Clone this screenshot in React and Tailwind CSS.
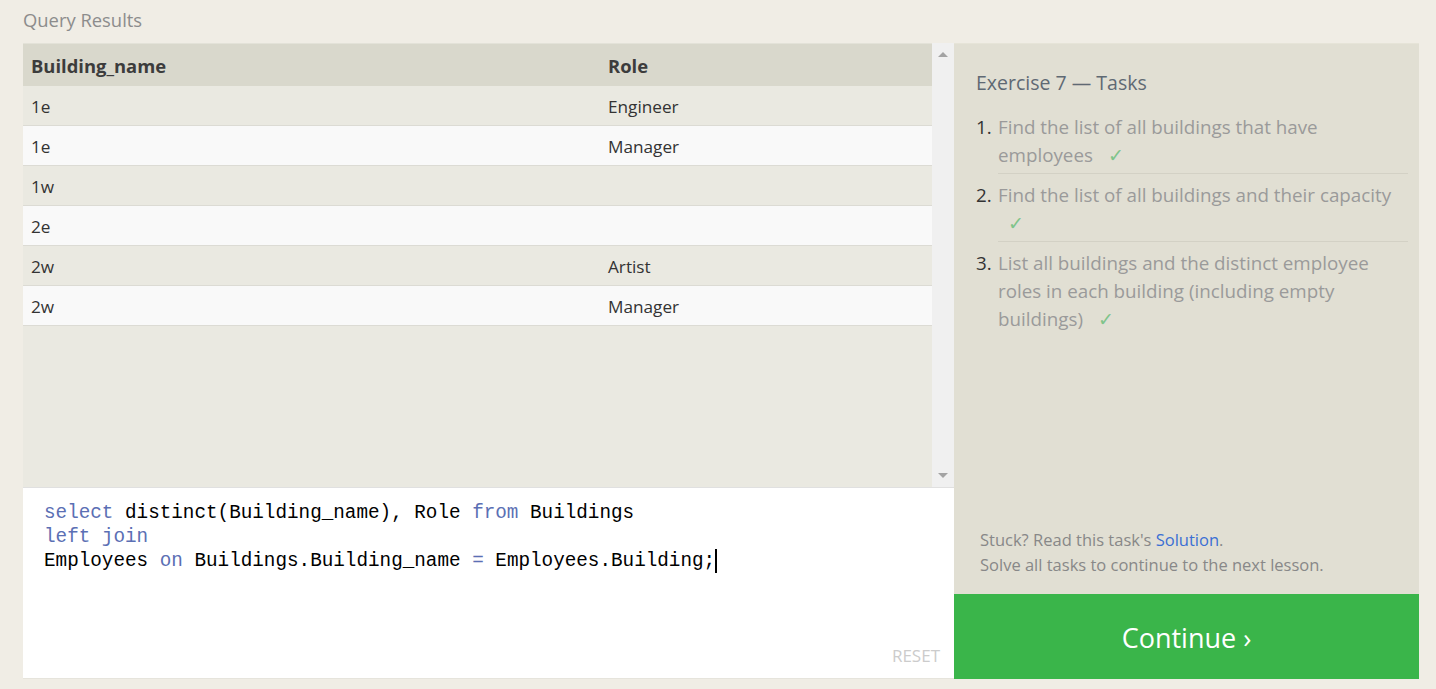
import React from "react";

const rows = [
  ["1e", "Engineer"],
  ["1e", "Manager"],
  ["1w", ""],
  ["2e", ""],
  ["2w", "Artist"],
  ["2w", "Manager"],
];

function Check() {
  return <span className="ml-[10px] text-[#7fc48a]">✓</span>;
}

export default function App() {
  return (
    <div
      className="w-[1436px] h-[689px] bg-[#f0ede5] overflow-hidden flex flex-col pl-[23px] pr-[17px]"
      style={{ fontFamily: '"Open Sans", "Noto Sans", sans-serif' }}
    >
      <div className="h-[43px] pt-[7px] text-[18.4px] leading-[26px] text-[#8c8c8c]">Query Results</div>
      <div className="flex h-[636px]">
        <div className="w-[931px] flex flex-col">
          <div className="h-[444px] flex bg-[#eae9e1]">
            <div className="w-[909px] flex flex-col">
              <div className="h-[43px] flex items-center pt-[2px] bg-[#d9d8cc] border-t border-[#e3e2d8] text-[18.4px] font-bold text-[#3c3c3c]">
                <div className="w-[585px] pl-[8px]">Building_name</div>
                <div>Role</div>
              </div>
              {rows.map((r, i) => (
                <div
                  key={i}
                  className={`h-[40px] flex items-center pt-[3px] text-[17.2px] text-[#333] border-b border-[#dcdbd4] ${
                    i % 2 === 0 ? "bg-[#eae9e1]" : "bg-[#f9f9f9]"
                  }`}
                >
                  <div className="w-[585px] pl-[8px]">{r[0]}</div>
                  <div>{r[1]}</div>
                </div>
              ))}
            </div>
            <div className="w-[22px] bg-[#f0f0f0] flex flex-col justify-between items-center pt-[8px] pb-[8px]">
              <svg width="10" height="6" viewBox="0 0 10 6">
                <path d="M0 6 L5 1 L10 6 Z" fill="#a3a3a3" />
              </svg>
              <svg width="10" height="6" viewBox="0 0 10 6">
                <path d="M0 0 L10 0 L5 5 Z" fill="#a3a3a3" />
              </svg>
            </div>
          </div>
          <div className="flex-1 bg-white border-t border-[#e0e0e0] border-b border-b-[#e6e4dc] relative pl-[21px] pt-[13px]">
            <pre
              className="text-[19.3px] leading-[24px] text-black"
              style={{ fontFamily: '"Liberation Mono", "DejaVu Sans Mono", monospace' }}
            >
              <span className="text-[#5b6fb4]">select</span> distinct(Building_name), Role{" "}
              <span className="text-[#5b6fb4]">from</span> Buildings{"\n"}
              <span className="text-[#5b6fb4]">left join</span>
              {"\n"}Employees <span className="text-[#5b6fb4]">on</span> Buildings.Building_name{" "}
              <span className="text-[#5b6fb4]">=</span> Employees.Building;
              <span className="inline-block w-[2px] h-[24px] bg-black align-top" />
            </pre>
            <div className="absolute right-[14px] bottom-[10px] text-[17px] text-[#cccccc]">RESET</div>
          </div>
        </div>
        <div className="w-[465px] flex flex-col border-t border-[#e6e4d8]">
          <div className="flex-1 bg-[#e1dfd3] flex flex-col pl-[22px] pr-[11px] pt-[25px]">
            <div className="text-[19.5px] leading-[28px] text-[#5f6973]">Exercise 7 — Tasks</div>
            <ol className="mt-[16px] text-[18.8px] leading-[28px] text-[#9a9a9a]">
              <li className="flex pb-[4px]">
                <span className="w-[22px] text-[#333]">1.</span>
                <span className="flex-1 border-b border-[#d3d1c5] pb-[4px]">
                  Find the list of all buildings that have employees{" "}
                  <Check />
                </span>
              </li>
              <li className="flex pt-[3px]">
                <span className="w-[22px] text-[#333]">2.</span>
                <span className="flex-1 border-b border-[#d3d1c5] pb-[4px]">
                  Find the list of all buildings and their capacity{" "}
                  <Check />
                </span>
              </li>
              <li className="flex pt-[7px]">
                <span className="w-[22px] text-[#333]">3.</span>
                <span className="flex-1 pr-[30px]">
                  List all buildings and the distinct employee roles in each building (including empty buildings){" "}
                  <Check />
                </span>
              </li>
            </ol>
            <div className="mt-auto pb-[17px] pl-[4px] text-[16.5px] leading-[25px] text-[#888]">
              <div>
                Stuck? Read this task's <span className="text-[#3b6fd4]">Solution</span>.
              </div>
              <div>Solve all tasks to continue to the next lesson.</div>
            </div>
          </div>
          <div className="h-[85px] bg-[#3ab54a] flex items-center justify-center pt-[3px] text-white text-[27px]">
            Continue ›
          </div>
        </div>
      </div>
    </div>
  );
}
